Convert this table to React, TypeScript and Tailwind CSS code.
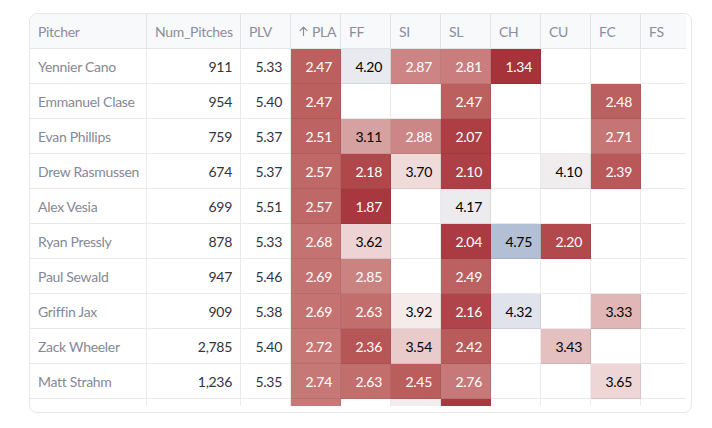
type Row = {
  name: string
  pitches: string
  plv: string
  pla: number
  ff?: number
  si?: number
  sl?: number
  ch?: number
  cu?: number
  fc?: number
  fs?: number
  hidden?: boolean
}

const rows: Row[] = [
  { name: 'Yennier Cano', pitches: '911', plv: '5.33', pla: 2.47, ff: 4.2, si: 2.87, sl: 2.81, ch: 1.34 },
  { name: 'Emmanuel Clase', pitches: '954', plv: '5.40', pla: 2.47, sl: 2.47, fc: 2.48 },
  { name: 'Evan Phillips', pitches: '759', plv: '5.37', pla: 2.51, ff: 3.11, si: 2.88, sl: 2.07, fc: 2.71 },
  { name: 'Drew Rasmussen', pitches: '674', plv: '5.37', pla: 2.57, ff: 2.18, si: 3.7, sl: 2.1, cu: 4.1, fc: 2.39 },
  { name: 'Alex Vesia', pitches: '699', plv: '5.51', pla: 2.57, ff: 1.87, sl: 4.17 },
  { name: 'Ryan Pressly', pitches: '878', plv: '5.33', pla: 2.68, ff: 3.62, sl: 2.04, ch: 4.75, cu: 2.2 },
  { name: 'Paul Sewald', pitches: '947', plv: '5.46', pla: 2.69, ff: 2.85, sl: 2.49 },
  { name: 'Griffin Jax', pitches: '909', plv: '5.38', pla: 2.69, ff: 2.63, si: 3.92, sl: 2.16, ch: 4.32, fc: 3.33 },
  { name: 'Zack Wheeler', pitches: '2,785', plv: '5.40', pla: 2.72, ff: 2.36, si: 3.54, sl: 2.42, cu: 3.43 },
  { name: 'Matt Strahm', pitches: '1,236', plv: '5.35', pla: 2.74, ff: 2.63, si: 2.45, sl: 2.76, fc: 3.65 },
  // only the top edge of this row shows under the fold, so no text is drawn
  { name: '', pitches: '', plv: '', pla: 2.75, si: 4.05, sl: 1.95, hidden: true },
]

const pitchCols = ['ff', 'si', 'sl', 'ch', 'cu', 'fc', 'fs'] as const

// value -> rgb, eyeballed from the heatmap
const stops: [number, [number, number, number]][] = [
  [1.3, [166, 50, 58]],
  [2.0, [169, 56, 64]],
  [2.4, [184, 89, 89]],
  [2.8, [201, 125, 124]],
  [3.1, [214, 160, 160]],
  [3.4, [227, 189, 189]],
  [3.7, [240, 219, 219]],
  [3.95, [247, 237, 237]],
  [4.15, [237, 237, 240]],
  [4.35, [222, 225, 234]],
  [4.75, [179, 191, 212]],
]

function heat(v: number) {
  if (v <= stops[0][0]) return `rgb(${stops[0][1].join(',')})`
  for (let i = 1; i < stops.length; i++) {
    const [v1, c1] = stops[i]
    const [v0, c0] = stops[i - 1]
    if (v <= v1) {
      const t = (v - v0) / (v1 - v0)
      const c = c0.map((x, k) => Math.round(x + (c1[k] - x) * t))
      return `rgb(${c.join(',')})`
    }
  }
  return `rgb(${stops[stops.length - 1][1].join(',')})`
}

const cell =
  'flex h-[35px] items-center whitespace-nowrap border-r border-b border-[rgba(49,51,63,0.1)] px-2'

function HeatCell({ value, hidden }: { value?: number; hidden?: boolean }) {
  if (value === undefined) {
    return <div className={cell} />
  }
  return (
    <div
      className={`${cell} justify-end ${value > 3 ? 'text-black' : 'text-white'}`}
      style={{ backgroundColor: heat(value) }}
    >
      {hidden ? '' : value.toFixed(2)}
    </div>
  )
}

export default function App() {
  const headers = ['FF', 'SI', 'SL', 'CH', 'CU', 'FC', 'FS']

  return (
    <div className="min-h-screen bg-white pl-[29px] pt-[13px] font-['Source_Sans_Pro','Lato',sans-serif] text-[14px] tracking-[-0.3px]">
      <div className="h-[400px] w-[663px] overflow-hidden rounded-lg border border-[#e6e7eb]">
        <div className="h-[392px] w-[656px] overflow-hidden">
          <div className="grid w-max grid-cols-[117px_94px_50px_50px_50px_50px_50px_50px_50px_50px_50px]">
            <div className={`${cell} bg-[#f8f9fb] text-[#8a8d9b]`}>Pitcher</div>
            <div className={`${cell} bg-[#f8f9fb] text-[#8a8d9b]`}>Num_Pitches</div>
            <div className={`${cell} bg-[#f8f9fb] text-[#8a8d9b]`}>PLV</div>
            <div className={`${cell} gap-[4px] bg-[#f8f9fb] text-[#8a8d9b]`}>
              <svg
                className="block h-[10px] w-[9px] shrink-0"
                viewBox="0 0 9 10"
                fill="none"
                stroke="currentColor"
                strokeWidth="1.2"
                strokeLinecap="round"
              >
                <path d="M4.5 1.2V9.6M1 4.6l3.5-3.4L8 4.6" />
              </svg>
              PLA
            </div>
            {headers.map((h) => (
              <div key={h} className={`${cell} bg-[#f8f9fb] text-[#8a8d9b]`}>
                {h}
              </div>
            ))}

            {rows.map((r, i) => (
              <div key={i} className="contents">
                <div className={`${cell} text-[#858897]`}>{r.name}</div>
                <div className={`${cell} justify-end text-[#31333f]`}>{r.pitches}</div>
                <div className={`${cell} justify-end text-[#31333f]`}>{r.plv}</div>
                <HeatCell value={r.pla} hidden={r.hidden} />
                {pitchCols.map((c) => (
                  <HeatCell key={c} value={r[c]} hidden={r.hidden} />
                ))}
              </div>
            ))}
          </div>
        </div>
      </div>
    </div>
  )
}
